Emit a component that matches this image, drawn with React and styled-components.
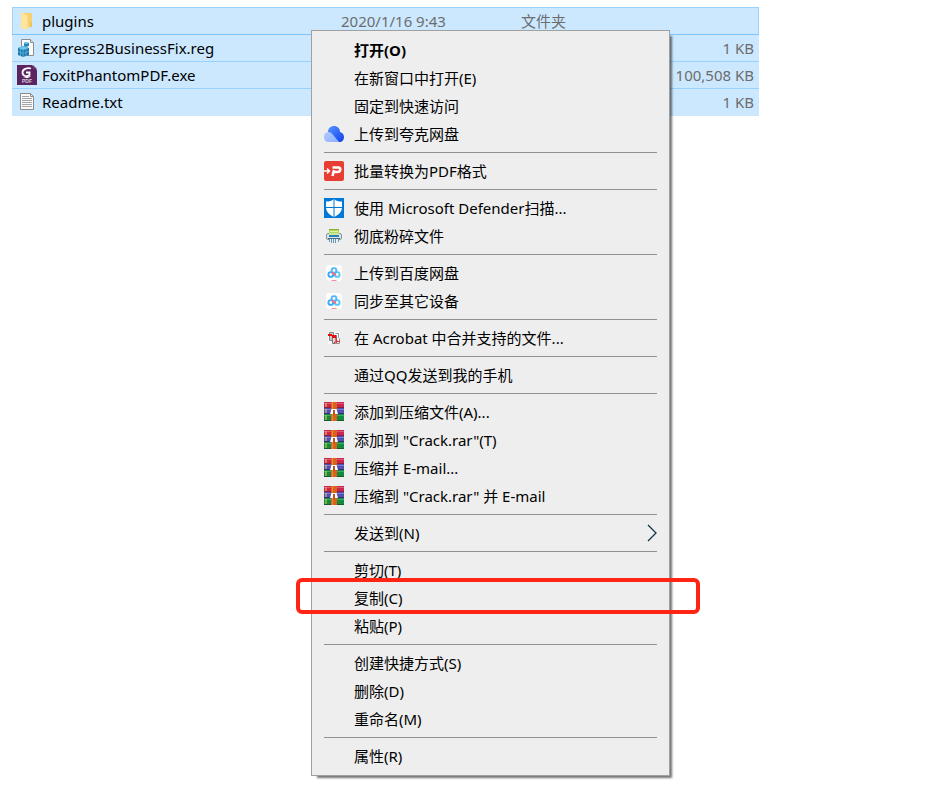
import React from "react";
import styled, { createGlobalStyle, css } from "styled-components";

const FolderIcon = () => (
  <svg width="20" height="20" viewBox="0 0 20 20" aria-hidden="true">
    <path d="M5 2h10v14H5z" fill="#f5d271" />
    <path d="M4 1l6 3v15l-6-2z" fill="#ffe49a" />
    <path d="M10 4h1v12l-1 3z" fill="#fbdc88" />
    <path d="M13 11h2v5h-2z" fill="#eec45a" />
  </svg>
);

const RegIcon = () => (
  <svg width="20" height="20" viewBox="0 0 20 20" aria-hidden="true">
    <path d="M4.500 1.500h9l3 3v13h-12z" fill="#fbfbfb" stroke="#8e8e8e" />
    <path d="M13.500 1.500v3h3" fill="#e2e2e2" stroke="#8e8e8e" />
    <path d="M1 10l5-2 6 2v7l-6 2-5-2z" fill="#1a78ad" />
    <path d="M1 10l5-2 6 2-6 2z" fill="#6dc5ec" />
    <path d="M6 12v7M3.500 11v7M9 11v7M1 13.500l5 2 6-2" fill="none" stroke="#67bde5" strokeWidth="0.700" />
    <path d="M9 4l3 1v3l-3 1-2-1V5z" fill="#2487bd" />
    <path d="M7 5l2-1 3 1-3 1z" fill="#75cdf0" />
  </svg>
);

const FoxitIcon = () => (
  <svg width="20" height="20" viewBox="0 0 20 20" aria-hidden="true">
    <path d="M0 0h15l5 5v15H0z" fill="#5b2460" />
    <path d="M16 0l4 4h-4z" fill="#6e3b73" />
    <path d="M14 3.500C10 2.500 5.500 4 5.500 7.500c0 4 5 4.500 7 2.500V7.500H9" fill="none" stroke="#fff" strokeWidth="1.800" />
    <path d="M14 11c-2 2.500-6 2.500-8 1 3 .500 5.500 0 8-1z" fill="#fff" />
    <text x="10" y="18" textAnchor="middle" fontFamily="Liberation Sans, sans-serif" fontSize="5" fontWeight="700" fill="#d9c9dc">PDF</text>
  </svg>
);

const TextFileIcon = () => (
  <svg width="20" height="20" viewBox="0 0 20 20" aria-hidden="true">
    <path d="M3.500 1.500h10l3 3v13h-13z" fill="#fafafa" stroke="#8b8b8b" />
    <path d="M13.500 1.500v3h3" fill="none" stroke="#8b8b8b" />
    <path d="M5 4.500h7M5 6.500h10M5 8.500h10M5 10.500h10M5 12.500h10M5 14.500h10" stroke="#a4a4a4" />
  </svg>
);

const QuarkIcon = () => (
  <svg width="20" height="20" viewBox="0 0 20 20" aria-hidden="true">
    <defs>
      <linearGradient id="quarkDark" x1="0" y1="0" x2="1" y2="1">
        <stop offset="0" stopColor="#5a94ff" />
        <stop offset="0.600" stopColor="#2a62f5" />
        <stop offset="1" stopColor="#1540e0" />
      </linearGradient>
      <linearGradient id="quarkLight" x1="0" y1="0" x2="1" y2="1">
        <stop offset="0" stopColor="#b3caff" />
        <stop offset="1" stopColor="#8fb0ff" />
      </linearGradient>
    </defs>
    <path d="M4 8C4 4.500 6.500 2 10 2s6 2.500 6 6c2.500.500 4 2.500 4 5s-1.500 5-4 5H8z" fill="url(#quarkDark)" />
    <path d="M4 8c2.500.300 3.500 1 4.700 2.500L15 18H4.500C2 18 0 16 0 13s1.500-4.500 4-5z" fill="url(#quarkLight)" />
  </svg>
);

const ConvertIcon = () => (
  <svg width="20" height="20" viewBox="0 0 20 20" aria-hidden="true">
    <rect width="20" height="20" rx="2" fill="#e83d32" />
    <path d="M0 10h5M3 7.500L5.500 10 3 12.500" fill="none" stroke="#fff" strokeWidth="1.500" />
    <path d="M8.500 15L10 9M8.500 6.500h6c3 0 2 4.500-1 4.500H10" fill="none" stroke="#fff" strokeWidth="2.600" />
  </svg>
);

const DefenderIcon = () => (
  <svg width="20" height="20" viewBox="0 0 20 20" aria-hidden="true">
    <path d="M0 0h20v20H0z" fill="#0078d7" />
    <path d="M10 1c2 2 4.500 2.500 8 2.500V9c0 5-3.500 8-8 10-4.500-2-8-5-8-10V3.500C5.500 3.500 8 3 10 1z" fill="#fff" />
    <path d="M10 1v18M2 9.500h16" stroke="#0078d7" />
  </svg>
);

const ShredIcon = () => (
  <svg width="16" height="16" viewBox="0 0 16 16" aria-hidden="true">
    <path d="M3 1h10v5H3z" fill="#b3d957" />
    <path d="M3 1.500h10" stroke="#86ad3d" />
    <path d="M4 3.500h8" stroke="#e1f3a0" />
    <rect x="0.500" y="5.500" width="15" height="6" rx="1.500" fill="#dbe4ea" stroke="#8495a1" />
    <path d="M3 5h10v2H3z" fill="#cbe6a0" />
    <path d="M3 8h10" stroke="#2c7fb5" strokeWidth="2" />
    <path d="M2 10.500h12" stroke="#456b83" />
    <path d="M3 11h10v3H3z" fill="#e4f2f9" />
    <path d="M3.500 11v3M5.500 11v4M7.500 11v4M9.500 11v4M12.500 11v3" stroke="#6f94aa" />
  </svg>
);

const BaiduIcon = () => (
  <svg width="16" height="16" viewBox="0 0 16 16" aria-hidden="true">
    <rect width="16" height="16" rx="3" fill="#fcfcfc" />
    <g fill="none" strokeWidth="1.900">
      <circle cx="4.800" cy="9.500" r="2.400" stroke="#36aaf5" />
      <circle cx="11.200" cy="9.500" r="2.400" stroke="#56c8f9" />
      <circle cx="8" cy="5.500" r="2.400" stroke="#4fb6f7" />
      <path d="M6.200 7.200C6.500 8.800 9 8.500 9.600 10.500" stroke="#f76d83" />
    </g>
    <path d="M5.500 15.500h5" stroke="#f48d9d" />
  </svg>
);

const AcrobatIcon = () => (
  <svg width="16" height="16" viewBox="0 0 16 16" aria-hidden="true">
    <path d="M2 2h12v12H2z" fill="#fafafa" />
    <path d="M3.500 2.500h4v8h-4z" fill="#c8c8c8" stroke="#848484" />
    <path d="M6.500 5.500h4v8h-4z" fill="#ddd" stroke="#777" />
    <path d="M9.500 3.500h3v4l1 1v5h-5" fill="none" stroke="#929292" />
    <path d="M2 4h4v1h4v3H6V6H2z" fill="#e70c12" />
    <path d="M8 13c2-2 2-3 2-5 0 3 1.500 4 4 3.500-2 0-4 0-6 1.500z" fill="none" stroke="#ed2730" />
  </svg>
);

const RarIcon = () => (
  <svg width="20" height="20" viewBox="0 0 20 20" aria-hidden="true">
    <path d="M0 0h20v6H0z" fill="#cc2450" />
    <path d="M0 1.500h20" stroke="#dc5975" />
    <path d="M0 6h20v6H0z" fill="#514fb1" />
    <path d="M0 7.500h20" stroke="#7d7bce" />
    <path d="M0 12h20v7H0z" fill="#138a3f" />
    <path d="M0 13.500h20" stroke="#3caa62" />
    <path d="M0 5.500h20" stroke="#8b1d3d" />
    <path d="M0 11.500h20" stroke="#343176" />
    <path d="M0 18.500h20" stroke="#155c31" />
    <path d="M2 1v4M2 7v4M2 13v5" stroke="#f0d052" />
    <path d="M7 0h6v19H7z" fill="#da6317" />
    <path d="M8.500 0v19" stroke="#ef883c" />
    <path d="M6 12l1.500-5h5L14 12z" fill="#fff" />
    <path d="M9 8h2v5H9z" fill="#bd541d" />
  </svg>
);

const ChevronIcon = () => (
  <svg width="12" height="18" viewBox="0 0 12 18" aria-hidden="true">
    <path d="M2 1l8 8-8 8" fill="none" stroke="#163449" strokeWidth="1.300" />
  </svg>
);

const files = [
  { name: "plugins", date: "2020/1/16 9:43", type: "文件夹", size: "", icon: FolderIcon, focused: true },
  { name: "Express2BusinessFix.reg", size: "1 KB", icon: RegIcon },
  { name: "FoxitPhantomPDF.exe", size: "100,508 KB", icon: FoxitIcon },
  { name: "Readme.txt", size: "1 KB", icon: TextFileIcon },
];

const groups = [
  [
    { label: "打开(O)", strong: true },
    { label: "在新窗口中打开(E)" },
    { label: "固定到快速访问" },
    { label: "上传到夸克网盘", icon: QuarkIcon },
  ],
  [{ label: "批量转换为PDF格式", icon: ConvertIcon }],
  [
    { label: "使用 Microsoft Defender扫描...", icon: DefenderIcon },
    { label: "彻底粉碎文件", icon: ShredIcon },
  ],
  [
    { label: "上传到百度网盘", icon: BaiduIcon },
    { label: "同步至其它设备", icon: BaiduIcon },
  ],
  [{ label: "在 Acrobat 中合并支持的文件...", icon: AcrobatIcon }],
  [{ label: "通过QQ发送到我的手机" }],
  [
    { label: "添加到压缩文件(A)...", icon: RarIcon },
    { label: '添加到 "Crack.rar"(T)', icon: RarIcon },
    { label: "压缩并 E-mail...", icon: RarIcon },
    { label: '压缩到 "Crack.rar" 并 E-mail', icon: RarIcon },
  ],
  [{ label: "发送到(N)", submenu: true }],
  [
    { label: "剪切(T)" },
    { label: "复制(C)", marked: true },
    { label: "粘贴(P)" },
  ],
  [
    { label: "创建快捷方式(S)" },
    { label: "删除(D)" },
    { label: "重命名(M)" },
  ],
  [{ label: "属性(R)" }],
];

const App = () => {
  return (
    <>
      <GlobalStyle />
      <Explorer>
        <FileTable>
          <tbody>
            {files.map(({ icon: Icon, ...file }) => (
              <FileRow key={file.name} $focused={file.focused}>
                <NameCell>
                  <Icon />
                  {file.name}
                </NameCell>
                <DetailCell>{file.date}</DetailCell>
                <DetailCell>{file.type}</DetailCell>
                <SizeCell>{file.size}</SizeCell>
              </FileRow>
            ))}
          </tbody>
        </FileTable>
        <Menu role="menu">
          {groups.map((group, index) => (
            <React.Fragment key={index}>
              {index > 0 && <Separator />}
              {group.map(({ icon: Icon, ...item }) => (
                <MenuItem key={item.label} type="button" role="menuitem" $strong={item.strong}>
                  <IconSlot>{Icon && <Icon />}</IconSlot>
                  <Label>{item.label}</Label>
                  {item.submenu && <ChevronIcon />}
                  {item.marked && <Marker />}
                </MenuItem>
              ))}
            </React.Fragment>
          ))}
        </Menu>
      </Explorer>
    </>
  );
};

export default App;

const GlobalStyle = createGlobalStyle`
  * {
    box-sizing: border-box;
  }
  body {
    margin: 0;
    background: #fff;
    color: #000;
    font-family: "Noto Sans", "Noto Sans CJK SC", sans-serif;
    font-size: 15px;
  }
`;

const Explorer = styled.main`
  position: relative;
  min-height: 100vh;
  padding: 7px 190px 0 12px;
`;

const FileTable = styled.table`
  display: block;
  tbody {
    display: block;
  }
`;

const FileRow = styled.tr`
  display: grid;
  grid-template-columns: 329px 180px 1fr 120px;
  align-items: center;
  height: 27px;
  background: #cce8ff;
  border-bottom: 1px solid #99d1ff;
  &:last-child {
    border-bottom-color: #cce8ff;
  }
  ${(props) =>
    props.$focused &&
    css`
      height: 28px;
      box-shadow: inset 1px 1px #99d1ff, inset -1px 0 #99d1ff;
      border-bottom-color: #7cc4ff;
    `}
`;

const NameCell = styled.td`
  display: flex;
  align-items: center;
  gap: 5px;
  padding: 0 0 0 5px;
  line-height: 24px;
  white-space: nowrap;
`;

const DetailCell = styled.td`
  padding: 0;
  line-height: 24px;
  color: #6d6d6d;
  white-space: nowrap;
`;

const SizeCell = styled(DetailCell)`
  padding-right: 5px;
  text-align: right;
`;

const Menu = styled.div`
  position: absolute;
  top: 30px;
  left: 311px;
  min-width: 359px;
  padding: 5px 0;
  background: #eee;
  border: 1px solid #a0a0a0;
  box-shadow: 4px 4px 2px -2px rgba(0, 0, 0, 0.55);
`;

const MenuItem = styled.button`
  position: relative;
  display: flex;
  align-items: center;
  gap: 10px;
  width: 100%;
  height: 28px;
  padding: 0 11px 0 12px;
  border: 0;
  background: none;
  color: inherit;
  font: inherit;
  font-weight: ${(props) => (props.$strong ? 700 : 400)};
  line-height: 28px;
  text-align: left;
  white-space: nowrap;
`;

const IconSlot = styled.span`
  display: flex;
  flex: none;
  align-items: center;
  justify-content: center;
  width: 20px;
  height: 20px;
`;

const Label = styled.span`
  flex: 1;
`;

const Separator = styled.hr`
  height: 1px;
  margin: 4px 12px;
  border: 0;
  background: #919191;
`;

/* red frame drawn round the item to pick */
const Marker = styled.span`
  position: absolute;
  inset: -6px -31px -2px -16px;
  z-index: 1;
  border: 4px solid #ff2414;
  border-radius: 6px;
  pointer-events: none;
`;
